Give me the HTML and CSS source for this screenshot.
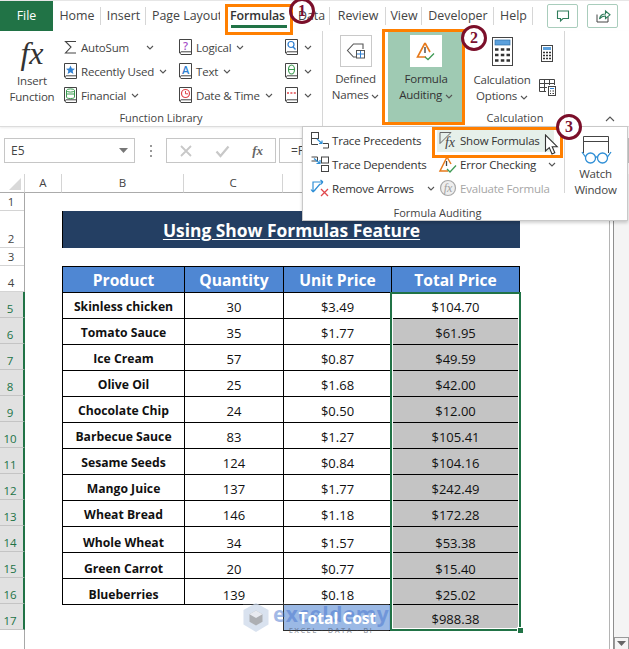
FILE: index.html
```html
<!DOCTYPE html>
<html lang="en">
<head>
<meta charset="utf-8">
<title>Using Show Formulas Feature</title>
<link rel="stylesheet" href="styles.css">
</head>
<body>
<svg class="defs" width="0" height="0" aria-hidden="true">
  <symbol id="book" viewBox="0 0 15 18">
    <path d="M1.5 15V1.5H13.5V16.5H3A1.5 1.5 0 0 1 3 13.8H13.5" fill="none" stroke="#444" stroke-width="1"/>
  </symbol>
  <symbol id="chev" viewBox="0 0 8 5">
    <path d="M1 1L4 4L7 1" fill="none" stroke="#555" stroke-width="1.1"/>
  </symbol>
</svg>
<div class="app">
  <nav class="tabs">
    <div class="tab file">File</div>
    <div class="tab sep">Home</div>
    <div class="tab sep">Insert</div>
    <div class="tab clip"><span>Page Layout</span></div>
    <div class="tab active"><span>Formulas</span></div>
    <div class="tab sep">Data</div>
    <div class="tab sep">Review</div>
    <div class="tab sep">View</div>
    <div class="tab sep">Developer</div>
    <div class="tab sep">Help</div>
    <div class="tab-actions">
      <div class="tab-btn"><svg width="16" height="16" viewBox="0 0 16 16"><path d="M2.5 3H13.5V10.5H8L5.5 13V10.5H2.5Z" fill="none" stroke="#2f7d5b" stroke-width="1.1"/></svg></div>
      <div class="tab-btn"><svg width="18" height="16" viewBox="0 0 18 16"><path d="M3 6.5V14H14V9" fill="none" stroke="#444" stroke-width="1"/><path d="M5.5 11C6 7.5 8.5 6 11.5 6V3L16 6.8L11.5 10.5V8C9 8 7 9 5.5 11Z" fill="none" stroke="#2f7d5b" stroke-width="1.1"/></svg></div>
    </div>
  </nav>

  <section class="ribbon">
    <div class="group g-lib">
      <div class="group-body">
        <div class="big-btn b-insert">
          <div class="fx-big">fx</div>
          <div class="big-label">Insert<br>Function</div>
        </div>
        <div class="list l-one">
          <div class="item"><svg class="ico" width="15" height="18" viewBox="0 0 15 18"><path d="M13 3.5H2.5L8 9L2.5 15H13" fill="none" stroke="#444" stroke-width="1.1"/></svg><span>AutoSum</span><svg class="chev c-far" width="8" height="5"><use href="#chev"/></svg></div>
          <div class="item"><svg class="ico" width="15" height="18"><use href="#book"/><path d="M7.5 3.5L8.8 6.5L12 6.8L9.6 8.8L10.4 12L7.5 10.3L4.6 12L5.4 8.8L3 6.8L6.2 6.5Z" fill="#2f7fd1"/></svg><span>Recently Used</span><svg class="chev" width="8" height="5"><use href="#chev"/></svg></div>
          <div class="item"><svg class="ico" width="15" height="18"><use href="#book"/><ellipse cx="7.5" cy="4.5" rx="4" ry="1.6" fill="none" stroke="#3a9a4f"/><path d="M3.5 4.5V11C3.5 12 5 12.5 7.5 12.5S11.5 12 11.5 11V4.5M3.5 8H11.5" fill="none" stroke="#3a9a4f"/></svg><span>Financial</span><svg class="chev" width="8" height="5"><use href="#chev"/></svg></div>
        </div>
        <div class="list l-two">
          <div class="item"><svg class="ico" width="15" height="18"><use href="#book"/><text x="7.5" y="11.5" class="glyph g-purple">?</text></svg><span>Logical</span><svg class="chev" width="8" height="5"><use href="#chev"/></svg></div>
          <div class="item"><svg class="ico" width="15" height="18"><use href="#book"/><text x="7.5" y="11.5" class="glyph g-blue">A</text></svg><span>Text</span><svg class="chev" width="8" height="5"><use href="#chev"/></svg></div>
          <div class="item"><svg class="ico" width="15" height="18"><use href="#book"/><circle cx="7.5" cy="7.5" r="4" fill="none" stroke="#e0474c" stroke-width="1.2"/><path d="M7.5 5V7.8H10" fill="none" stroke="#e0474c"/></svg><span>Date &amp; Time</span><svg class="chev" width="8" height="5"><use href="#chev"/></svg></div>
        </div>
        <div class="list l-three">
          <div class="item"><svg class="ico" width="15" height="18"><use href="#book"/><circle cx="7" cy="6.5" r="3" fill="none" stroke="#2f7fd1" stroke-width="1.2"/><path d="M9 8.8L11.5 11.5" stroke="#2f7fd1" stroke-width="1.3"/></svg><svg class="chev" width="8" height="5"><use href="#chev"/></svg></div>
          <div class="item"><svg class="ico" width="15" height="18"><use href="#book"/><ellipse cx="7.5" cy="7.5" rx="3" ry="4.5" fill="none" stroke="#3a9a4f" stroke-width="1.1"/><path d="M4.5 7.5H10.5" stroke="#3a9a4f"/></svg><svg class="chev" width="8" height="5"><use href="#chev"/></svg></div>
          <div class="item"><svg class="ico" width="15" height="18"><use href="#book"/><path d="M3 7H12" stroke="#e0474c" stroke-width="1.4" stroke-dasharray="2 1.4"/></svg><svg class="chev" width="8" height="5"><use href="#chev"/></svg></div>
        </div>
      </div>
      <div class="group-label">Function Library</div>
    </div>

    <div class="group g-names">
      <div class="big-btn">
        <div class="icon-box"><svg width="20" height="20" viewBox="0 0 20 20"><path d="M14 3H7.5L1.5 9.5L7.5 16H10M14 3L17 3V8" fill="none" stroke="#555" stroke-width="1.1"/><rect x="10.5" y="9.5" width="8" height="7.5" fill="#fff" stroke="#555"/><path d="M11 13H18M14.5 10V17" stroke="#2f7fd1"/></svg></div>
        <div class="big-label label-up">Defined<br>Names <svg class="chev" width="8" height="5"><use href="#chev"/></svg></div>
      </div>
    </div>

    <div class="group g-audit">
      <div class="big-btn audit-btn">
        <div class="icon-box white"><svg width="20" height="20" viewBox="0 0 20 20"><path d="M9 2L1.5 16H10" fill="none" stroke="#e67a1c" stroke-width="1.6"/><path d="M9 2L14 11" stroke="#e67a1c" stroke-width="1.6"/><path d="M9 6V12" stroke="#444" stroke-width="1.4"/><path d="M9 16L12 18.5L18 12.5" fill="none" stroke="#3f9a55" stroke-width="1.3"/></svg></div>
        <div class="big-label label-up">Formula<br>Auditing <svg class="chev" width="8" height="5"><use href="#chev"/></svg></div>
      </div>
    </div>

    <div class="group g-calc">
      <div class="group-body calc-body">
        <div class="big-btn b-calc">
          <svg class="calc-big" width="21" height="29" viewBox="0 0 21 29"><rect x=".5" y=".5" width="20" height="28" fill="#fff" stroke="#444"/><rect x="3" y="3" width="15" height="5" fill="#5ba0dc" stroke="#2f6fa8" stroke-width=".7"/><path d="M3 12.5H6.5M8.8 12.5H12.3M14.5 12.5H18M3 18H6.5M8.8 18H12.3M14.5 18H18M3 23.5H6.5M8.8 23.5H12.3M14.5 23.5H18" stroke="#333" stroke-width="2.6"/></svg>
          <div class="big-label calc-label">Calculation<br>Options <svg class="chev" width="8" height="5"><use href="#chev"/></svg></div>
        </div>
        <div class="calc-side">
          <svg width="12" height="17" viewBox="0 0 12 17"><rect x=".5" y=".5" width="11" height="16" fill="#fff" stroke="#444"/><rect x="2" y="2" width="8" height="3" fill="#5ba0dc"/><path d="M2 7.5H4M5 7.5H7M8 7.5H10M2 10.5H4M5 10.5H7M8 10.5H10M2 13.5H4M5 13.5H7M8 13.5H10" stroke="#333" stroke-width="1.5"/></svg>
          <svg width="17" height="17" viewBox="0 0 17 17"><path d="M.5 .5H15.5V6M.5 .5V12.5H7M.5 4.5H15.5M.5 8.5H8M5.5 .5V12.5M10.5 .5V6" fill="none" stroke="#444"/><rect x="9.5" y="7.5" width="7" height="9" fill="#fff" stroke="#444"/><path d="M11 9.5H15" stroke="#2f7fd1"/><path d="M11 12H12M13.5 12H15M11 14.5H12M13.5 14.5H15" stroke="#333"/></svg>
        </div>
      </div>
      <div class="group-label">Calculation</div>
    </div>
    <svg class="collapse" width="10" height="6" viewBox="0 0 10 6"><path d="M1 5L5 1L9 5" fill="none" stroke="#555" stroke-width="1.1"/></svg>
  </section>

  <section class="formula-bar">
    <div class="name-box"><span>E5</span><svg width="9" height="5" viewBox="0 0 9 5"><path d="M0 0H9L4.5 5Z" fill="#777"/></svg></div>
    <div class="dots"><i></i><i></i><i></i></div>
    <div class="fx-box">
      <svg width="14" height="14" viewBox="0 0 14 14"><path d="M2 2L12 12M12 2L2 12" stroke="#c8c8c8" stroke-width="1.8"/></svg>
      <svg width="15" height="14" viewBox="0 0 15 14"><path d="M1.5 7.5L5.5 12L13.5 2.5" fill="none" stroke="#c8c8c8" stroke-width="2.2"/></svg>
      <span class="fx-small">fx</span>
    </div>
    <div class="formula-input">=F</div>
  </section>

  <section class="sheet">
    <div class="sheet-main">
      <div class="colheads">
        <div class="corner"></div>
        <div class="colhead">A</div>
        <div class="colhead">B</div>
        <div class="colhead">C</div>
        <div class="colhead">D</div>
        <div class="colhead">E</div>
        <div class="colhead">F</div>
      </div>
      <div class="sheet-body">
        <div class="rowheads">
          <div class="rh h18">1</div>
          <div class="rh h37">2</div>
          <div class="rh h18">3</div>
          <div class="rh">4</div>
          <div class="rh sel">5</div>
          <div class="rh sel">6</div>
          <div class="rh sel">7</div>
          <div class="rh sel">8</div>
          <div class="rh sel">9</div>
          <div class="rh sel">10</div>
          <div class="rh sel">11</div>
          <div class="rh sel">12</div>
          <div class="rh sel">13</div>
          <div class="rh sel">14</div>
          <div class="rh sel">15</div>
          <div class="rh sel">16</div>
          <div class="rh sel">17</div>
        </div>
        <div class="cells">
          <h1 class="title"><span>Using Show Formulas Feature</span></h1>
          <table class="data">
            <colgroup><col class="c-b"><col class="c-c"><col class="c-d"><col class="c-e"></colgroup>
            <thead><tr><th>Product</th><th>Quantity</th><th>Unit Price</th><th>Total Price</th></tr></thead>
            <tbody>
              <tr><td class="name">Skinless chicken</td><td>30</td><td>$3.49</td><td>$104.70</td></tr>
              <tr><td class="name">Tomato Sauce</td><td>35</td><td>$1.77</td><td class="grey">$61.95</td></tr>
              <tr><td class="name">Ice Cream</td><td>57</td><td>$0.87</td><td class="grey">$49.59</td></tr>
              <tr><td class="name">Olive Oil</td><td>25</td><td>$1.68</td><td class="grey">$42.00</td></tr>
              <tr><td class="name">Chocolate Chip</td><td>24</td><td>$0.50</td><td class="grey">$12.00</td></tr>
              <tr><td class="name">Barbecue Sauce</td><td>83</td><td>$1.27</td><td class="grey">$105.41</td></tr>
              <tr><td class="name">Sesame Seeds</td><td>124</td><td>$0.84</td><td class="grey">$104.16</td></tr>
              <tr><td class="name">Mango Juice</td><td>137</td><td>$1.77</td><td class="grey">$242.49</td></tr>
              <tr><td class="name">Wheat Bread</td><td>146</td><td>$1.18</td><td class="grey">$172.28</td></tr>
              <tr class="low"><td class="name">Whole Wheat</td><td>34</td><td>$1.57</td><td class="grey">$53.38</td></tr>
              <tr class="low"><td class="name">Green Carrot</td><td>20</td><td>$0.77</td><td class="grey">$15.40</td></tr>
              <tr class="low"><td class="name">Blueberries</td><td>139</td><td>$0.18</td><td class="grey">$25.02</td></tr>
              <tr><td class="blank"></td><td class="blank"></td><td class="total"><span>Total Cost</span></td><td class="grey">$988.38</td></tr>
            </tbody>
          </table>
          <div class="selection"><div class="handle"></div></div>
          <div class="watermark">
            <svg width="28" height="31" viewBox="0 0 28 31"><path d="M14 0L27.5 7.5V23L14 31L.5 23V7.5Z" fill="#c9d5e8" opacity=".7"/><path d="M14 8L21 12V20L14 24L7 20V12Z" fill="#9a9a9a" opacity=".7"/><path d="M14 8L21 12L14 16L7 12Z" fill="#eef1f6" opacity=".9"/></svg>
            <div class="wm-text"><div class="wm-name">exceldemy</div><div class="wm-sub">EXCEL · DATA · BI</div></div>
          </div>
        </div>
      </div>
    </div>
    <div class="scrollbar"><div class="scroll-btn"><svg width="9" height="5" viewBox="0 0 9 5"><path d="M0 0H9L4.5 5Z" fill="#666"/></svg></div></div>
  </section>

  <aside class="dropdown">
    <div class="dd-main">
      <div class="dd-grid">
        <div class="dd-item"><svg class="dd-ico" width="20" height="18" viewBox="0 0 20 18"><rect x="1.5" y="1.5" width="7" height="6" fill="none" stroke="#444"/><path d="M1.5 7.5V13.5H8" fill="none" stroke="#444"/><path d="M7 8L12 12.5M12 9.5V12.5H9" fill="none" stroke="#2f8fd6" stroke-width="1.2"/><path d="M13 12.5H18.5V17H13" fill="none" stroke="#444"/></svg><span>Trace Precedents</span></div>
        <div class="dd-item hover"><svg class="dd-ico" width="20" height="18" viewBox="0 0 20 18"><path d="M2 1.5H13L2 12.5Z" fill="none" stroke="#666"/><text x="7" y="16" class="glyph-fx">fx</text></svg><span>Show Formulas</span></div>
        <div class="dd-item"><svg class="dd-ico" width="20" height="18" viewBox="0 0 20 18"><path d="M1.5 2H7.5V6H1.5" fill="none" stroke="#444"/><path d="M4 3.5L10 8.5M10 5V8.5H6.5" fill="none" stroke="#2f8fd6" stroke-width="1.2"/><rect x="11.5" y="2" width="7" height="6" fill="none" stroke="#444"/><rect x="11.5" y="10.5" width="7" height="6" fill="none" stroke="#444"/></svg><span>Trace Dependents</span></div>
        <div class="dd-item"><svg class="dd-ico" width="20" height="18" viewBox="0 0 20 18"><path d="M9 2L2 16L10 16" fill="none" stroke="#e67a1c" stroke-width="1.5"/><path d="M9 2L13 9" stroke="#e67a1c" stroke-width="1.5"/><path d="M8.5 6V11" stroke="#444" stroke-width="1.3"/><path d="M9 14L12 17L18 10.5" fill="none" stroke="#3f9a55" stroke-width="1.3"/></svg><span>Error Checking</span><svg class="chev c-ec" width="8" height="5"><use href="#chev"/></svg></div>
        <div class="dd-item"><svg class="dd-ico" width="20" height="18" viewBox="0 0 20 18"><path d="M2 12V2H12M2 12L0 9.5M2 12L4.5 9.5M12 2L9.5 0M12 2L9.5 4.5M3 11L9 4" transform="translate(1 1)" fill="none" stroke="#2f8fd6" stroke-width="1.2"/><path d="M11 10L18 17M18 10L11 17" stroke="#e0474c" stroke-width="1.3"/></svg><span>Remove Arrows</span><svg class="chev c-ra" width="8" height="5"><use href="#chev"/></svg></div>
        <div class="dd-item off"><svg class="dd-ico" width="20" height="18" viewBox="0 0 20 18"><circle cx="10" cy="9" r="7.5" fill="#eee" stroke="#a8a8a8" stroke-width="1.2"/><text x="10" y="13" class="glyph-off">fx</text></svg><span>Evaluate Formula</span></div>
      </div>
      <div class="dd-label">Formula Auditing</div>
    </div>
    <div class="dd-watch">
      <svg width="32" height="32" viewBox="0 0 32 32"><path d="M3.5 19V2.5H28.5V19M3.5 7.5H28.5" fill="none" stroke="#444"/><circle cx="10.5" cy="24" r="5" fill="#fff" stroke="#2f8fd6" stroke-width="1.3"/><circle cx="22.5" cy="24" r="5" fill="#fff" stroke="#2f8fd6" stroke-width="1.3"/><path d="M15.5 23H17.5M5.5 23L2 18M27.5 23L31 18" fill="none" stroke="#2f8fd6" stroke-width="1.3"/></svg>
      <div class="big-label">Watch<br>Window</div>
    </div>
  </aside>

  <div class="mark m-formulas"></div>
  <div class="mark m-audit"></div>
  <div class="mark m-show"></div>
  <div class="badge b1">1</div>
  <div class="badge b2">2</div>
  <div class="badge b3">3</div>
  <svg class="cursor" width="15" height="22" viewBox="0 0 15 22"><path d="M1.5 1V17L5.3 13.6L8 20L10.8 18.8L8.2 12.7H13.2Z" fill="#fff" stroke="#333" stroke-width="1.1"/></svg>
</div>
</body>
</html>
```

FILE: styles.css
```css
* { box-sizing: border-box; }
html, body { margin: 0; padding: 0; background: #fff; }
.defs { position: absolute; }
.app {
  position: relative;
  width: 629px;
  height: 649px;
  overflow: hidden;
  font-family: "Open Sans", "Noto Sans", sans-serif;
  font-size: 12px;
  color: #444;
  display: flex;
  flex-direction: column;
  background: #fff;
}

/* Tabs */
.tabs {
  height: 31px;
  flex: none;
  display: grid;
  grid-template-columns: 53px 48px 45px 80px 67px 37px 56px 36px 72px 39px 1fr;
  border-top: 1px solid #e6e6e6;
  align-items: stretch;
}
.tab {
  display: flex;
  align-items: center;
  justify-content: center;
  font-size: 12.4px;
  color: #444;
  white-space: nowrap;
  padding-bottom: 1px;
  position: relative;
}
.tab.sep::after {
  content: "";
  position: absolute;
  right: 0;
  top: 6px;
  height: 18px;
  width: 1px;
  background: #d6d6d6;
}
.tab.file { background: #217346; color: #fff; }
.tab.clip { justify-content: flex-start; padding-left: 6px; overflow: hidden; }
.tab.clip span { display: block; width: 68px; overflow: hidden; }
.tab.active { color: #333; font-weight: 600; padding-right: 4px; letter-spacing: -.1px; }
.tab.active::after {
  content: "";
  position: absolute;
  left: 5px;
  right: 6px;
  bottom: 3px;
  height: 3px;
  background: #217346;
}
.tab-actions { display: flex; gap: 9px; padding: 3px 0 0 14px; }
.tab-btn {
  width: 31px;
  height: 24px;
  border: 1px solid #a9cdbc;
  border-radius: 2px;
  display: flex;
  align-items: center;
  justify-content: center;
}

/* Ribbon */
.ribbon {
  height: 96px;
  flex: none;
  display: flex;
  position: relative;
  border-bottom: 1px solid #dcdcdc;
  box-shadow: 0 1px 2px rgba(0, 0, 0, .08);
  background: #fff;
}
.group { display: flex; flex-direction: column; height: 95px; }
.group-body { flex: 1; display: flex; min-height: 0; }
.group-label {
  height: 18px;
  flex: none;
  text-align: center;
  font-size: 11px;
  line-height: 20px;
  color: #444;
}
.g-lib { width: 323px; border-right: 1px solid #d6d6d6; }
.g-names { width: 60px; }
.g-audit { width: 83px; }
.g-calc { width: 99px; border-right: 1px solid #d6d6d6; }
.collapse { position: absolute; left: 605px; bottom: 4px; }

.big-btn { display: flex; flex-direction: column; align-items: center; }
.big-label {
  font-size: 11.5px;
  letter-spacing: -.2px;
  line-height: 16px;
  text-align: center;
  color: #444;
  white-space: nowrap;
}
.b-insert { width: 58px; padding: 3px 0 0 6px; }
.fx-big {
  font-family: "Liberation Serif", serif;
  font-style: italic;
  font-size: 32px;
  line-height: 38px;
  height: 38px;
  color: #333;
}
.b-insert .big-label { margin-top: 1px; }
.list { display: flex; flex-direction: column; padding-top: 4px; }
.l-one { width: 120px; padding-left: 5px; }
.l-two { width: 106px; padding-left: 0; }
.l-three { padding-left: 0; }
.item {
  height: 24px;
  display: flex;
  align-items: center;
  gap: 3px;
  white-space: nowrap;
  font-size: 11.5px;
  letter-spacing: -.2px;
}
.ico { flex: none; }
.item span { margin-right: 2px; }
.l-three .item { gap: 5px; }
.chev { flex: none; }
.c-far { margin-left: 12px; }
.glyph { font-family: "Open Sans", sans-serif; font-size: 11px; text-anchor: middle; font-weight: 600; }
.g-purple { fill: #a54fc9; }
.g-blue { fill: #2f7fd1; }

.g-names .big-btn { width: 65px; }
.icon-box {
  width: 32px;
  height: 32px;
  margin-top: 4px;
  border: 1px solid #c9c9c9;
  display: flex;
  align-items: center;
  justify-content: center;
  background: #fff;
  flex: none;
}
.icon-box.white { border-color: #fff; }
.label-up { margin-top: 4px; }
.audit-btn { width: 76px; height: 91px; margin: 1px 0 0 5px; background: #9fcab3; color: #333; }
.audit-btn .big-label { color: #333; }
.audit-btn .icon-box { margin-top: 3px; }
.b-calc { width: 72px; padding-top: 6px; }
.calc-big { flex: none; }
.calc-label { margin-top: 6px; }
.calc-side { display: flex; flex-direction: column; align-items: center; gap: 17px; padding-top: 14px; width: 18px; }

/* Formula bar */
.formula-bar {
  height: 25px;
  flex: none;
  margin-top: 11px;
  display: flex;
  padding-left: 4px;
  align-items: stretch;
}
.name-box {
  width: 131px;
  border: 1px solid #c6c6c6;
  display: flex;
  align-items: center;
  justify-content: space-between;
  padding: 0 6px;
  font-size: 12px;
  color: #444;
}
.dots { width: 31px; display: flex; flex-direction: column; align-items: center; justify-content: center; gap: 3px; }
.dots i { width: 2px; height: 2px; background: #999; display: block; }
.fx-box {
  width: 110px;
  border: 1px solid #c6c6c6;
  display: flex;
  align-items: center;
  justify-content: space-between;
  padding: 0 12px;
}
.fx-small { font-family: "Liberation Serif", serif; font-style: italic; font-weight: 700; font-size: 13px; color: #666; }
.formula-input {
  flex: 1;
  margin-left: 3px;
  border: 1px solid #c6c6c6;
  padding-left: 11px;
  line-height: 23px;
}

/* Sheet */
.sheet { flex: 1; display: flex; margin-top: 11px; min-height: 0; }
.sheet-main { width: 610px; flex: none; border-right: 1px solid #b4b4b4; display: flex; flex-direction: column; }
.colheads {
  height: 19px;
  flex: none;
  display: grid;
  grid-template-columns: 25px 37px 122px 99px 108px 128px 1fr;
}
.corner { position: relative; border-right: 1px solid #d4d4d4; border-bottom: 1px solid #ababab; }
.corner::after {
  content: "";
  position: absolute;
  right: 3px;
  bottom: 2px;
  border-style: solid;
  border-width: 0 0 12px 12px;
  border-color: transparent transparent #d9d9d9 transparent;
}
.colhead {
  border-right: 1px solid #d4d4d4;
  border-bottom: 1px solid #ababab;
  text-align: center;
  font-size: 11.5px;
  line-height: 18px;
  color: #444;
}
.sheet-body { flex: 1; display: flex; min-height: 0; }
.rowheads {
  width: 25px;
  flex: none;
  border-right: 1px solid #a8a8a8;
  display: flex;
  flex-direction: column;
}
.rh {
  height: 26px;
  flex: none;
  display: flex;
  align-items: flex-end;
  justify-content: center;
  padding: 0 2px 0 0;
  border-bottom: 1px solid #d4d4d4;
  font-size: 11.5px;
  line-height: 16px;
  color: #444;
}
.h18 { height: 18px; }
.h37 { height: 37px; }
.rh.sel {
  background: #e1e1e1;
  color: #217346;
  border-bottom-color: #c4c4c4;
  margin-right: -1px;
  border-right: 2px solid #217346;
  padding-right: 3px;
}
.cells { position: relative; flex: 1; padding-left: 37px; padding-top: 18px; }
.title {
  margin: 0 0 18px;
  width: 458px;
  height: 37px;
  background: #243f63;
  border-left: 1px solid #000;
  color: #fff;
  font-size: 17.4px;
  font-weight: 700;
  line-height: 38px;
  text-align: center;
  white-space: nowrap;
}
.title span { text-decoration: underline; text-underline-offset: 2px; }
.data {
  border-collapse: collapse;
  table-layout: fixed;
  width: 457px;
  color: #111;
  font-size: 13px;
}
.c-b { width: 122px; }
.c-c { width: 99px; }
.c-d { width: 108px; }
.c-e { width: 128px; }
.data th, .data td {
  border: 1px solid #000;
  height: 26px;
  padding: 2px 0 0;
  line-height: 16px;
  text-align: center;
  white-space: nowrap;
  overflow: hidden;
}
.data th { background: #4f87d3; color: #fff; font-size: 15.6px; font-weight: 700; padding-top: 0; }
.data td.name { font-weight: 700; font-size: 12.2px; }
.data tr.low td { padding-top: 7px; }
.data td.grey { background: #c4c4c4; }
.data td.blank { border: 0; }
.data td.total { background: #86aae0; color: #fff; font-weight: 700; font-size: 15.6px; padding-top: 0; }
.total span { position: relative; z-index: 2; }
.selection {
  position: absolute;
  left: 365px;
  top: 99px;
  width: 131px;
  height: 339px;
  border: 2px solid #217346;
  box-shadow: inset 0 0 0 1px #fff;
  pointer-events: none;
}
.handle {
  position: absolute;
  right: -5px;
  bottom: -5px;
  width: 7px;
  height: 7px;
  background: #217346;
  border: 1px solid #fff;
}
.watermark {
  position: absolute;
  z-index: 1;
  left: 218px;
  top: 409px;
  width: 146px;
  height: 32px;
  display: flex;
  gap: 4px;
  background: rgba(255, 255, 255, .18);
}
.wm-text { display: flex; flex-direction: column; align-items: center; }
.wm-name { font-size: 21px; line-height: 24px; font-weight: 700; color: rgba(70, 115, 205, .5); letter-spacing: .4px; }
.wm-sub { font-size: 7.5px; line-height: 8px; color: rgba(70, 80, 100, .55); letter-spacing: 1.4px; font-weight: 600; }

.scrollbar {
  margin-left: 3px;
  flex: 1;
  border-left: 1px solid #8e8e8e;
  background: #f4f4f4;
  display: flex;
  flex-direction: column;
  justify-content: flex-end;
}
.scroll-btn {
  height: 12px;
  width: 15px;
  border: 1px solid #9a9a9a;
  border-bottom: 0;
  background: #f4f4f4;
  display: flex;
  align-items: center;
  justify-content: center;
}

/* Dropdown panel over the sheet */
.dropdown {
  position: absolute;
  left: 302px;
  top: 126px;
  width: 326px;
  height: 95px;
  background: #fff;
  border: 1px solid #c9c9c9;
  box-shadow: 0 2px 3px rgba(0, 0, 0, .18);
  display: flex;
}
.dd-main { width: 261px; display: flex; flex-direction: column; flex: none; }
.dd-grid {
  display: grid;
  grid-template-columns: 128px 1fr;
  grid-auto-rows: 24px;
  padding: 1px 0 0 7px;
}
.dd-item { display: flex; align-items: center; gap: 2px; white-space: nowrap; font-size: 11.5px; letter-spacing: -.2px; color: #333; position: relative; }
.dd-ico { flex: none; }
.dd-item.hover { background: #e6f0ea; height: 24px; width: 117px; margin-left: -1px; padding-left: 1px; }
.dd-item.off { color: #a6a6a6; }
.c-ec { position: absolute; left: 110px; top: 10px; }
.c-ra { position: absolute; left: 117px; top: 10px; }
.glyph-fx { font-family: "Liberation Serif", serif; font-style: italic; font-size: 14px; fill: #444; }
.glyph-off { font-family: "Liberation Serif", serif; font-style: italic; font-size: 12px; fill: #a0a0a0; text-anchor: middle; }
.dd-label { text-align: center; font-size: 11px; line-height: 16px; margin-top: 5px; color: #444; padding-left: 8px; }
.dd-watch {
  flex: 1;
  display: flex;
  flex-direction: column;
  align-items: center;
  padding-top: 7px;
  position: relative;
}
.dd-watch::before {
  content: "";
  position: absolute;
  left: 0;
  top: 2px;
  height: 64px;
  width: 1px;
  background: #d6d6d6;
}

/* Tutorial annotations */
.mark { position: absolute; border: 3px solid #ff7f00; pointer-events: none; }
.m-formulas { left: 225px; top: 4px; width: 68px; height: 31px; }
.m-audit { left: 382px; top: 29px; width: 83px; height: 96px; }
.m-show { left: 432px; top: 127px; width: 131px; height: 31px; }
.badge {
  position: absolute;
  width: 26px;
  height: 26px;
  border-radius: 50%;
  border: 3px solid #7b0f2a;
  background: #fff;
  color: #7b1030;
  font-family: "Liberation Serif", serif;
  font-weight: 700;
  font-size: 16px;
  line-height: 20px;
  text-align: center;
}
.b1 { left: 289px; top: -2px; background: transparent; }
.b2 { left: 461px; top: 25px; }
.b3 { left: 556px; top: 114px; }
.cursor { position: absolute; left: 544px; top: 134px; }
```
